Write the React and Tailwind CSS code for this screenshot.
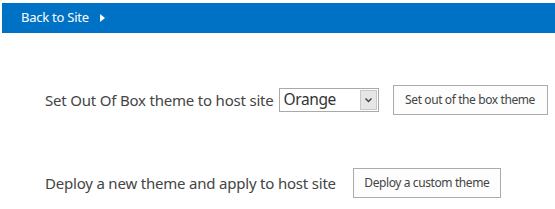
export default function App() {
  const font = { fontFamily: '"Segoe UI", "Noto Sans", "Open Sans", sans-serif' };
  return (
    <div className="w-[555px] h-[209px] bg-white overflow-hidden" style={font}>
      <div className="ml-[2px] mt-[3px] h-[30px] bg-[#0072c6] flex items-center pl-[19px] text-white text-[13px] tracking-[-0.25px]">
        <span>Back to Site</span>
        <svg className="ml-[11px]" width="5" height="8" viewBox="0 0 5 8">
          <path d="M0 0 L5 4 L0 8 Z" fill="white" />
        </svg>
      </div>

      <div className="flex items-center mt-[52px] pl-[45px] h-[30px]">
        <span className="text-[15px] tracking-[-0.2px] text-[#444444]">Set Out Of Box theme to host site</span>
        <div className="ml-[5px] w-[100px] h-[24px] border border-[#a9a9a9] flex items-center bg-white">
          <span className="flex-1 pl-[4px] text-[15.5px] tracking-[-0.4px] text-[#333]">Orange</span>
          <span className="w-[17px] h-[20px] mr-[1px] bg-[#e6e6e6] border border-[#c8c8c8] flex items-center justify-center">
            <svg width="7" height="5" viewBox="0 0 7 5">
              <path d="M0.5 0.5 L3.5 3.5 L6.5 0.5" stroke="#444" strokeWidth="1.5" fill="none" />
            </svg>
          </span>
        </div>
        <button className="ml-[14px] w-[155px] h-[30px] border border-[#ababab] bg-[#fdfdfd] text-[12px] tracking-[-0.4px] text-[#444444]">
          Set out of the box theme
        </button>
      </div>

      <div className="flex items-center mt-[53px] pl-[45px] h-[30px]">
        <span className="text-[15px] tracking-[-0.2px] text-[#444444]">Deploy a new theme and apply to host site</span>
        <button className="ml-[17px] w-[148px] h-[30px] border border-[#ababab] bg-[#fdfdfd] text-[12px] tracking-[-0.4px] text-[#444444]">
          Deploy a custom theme
        </button>
      </div>
    </div>
  );
}
